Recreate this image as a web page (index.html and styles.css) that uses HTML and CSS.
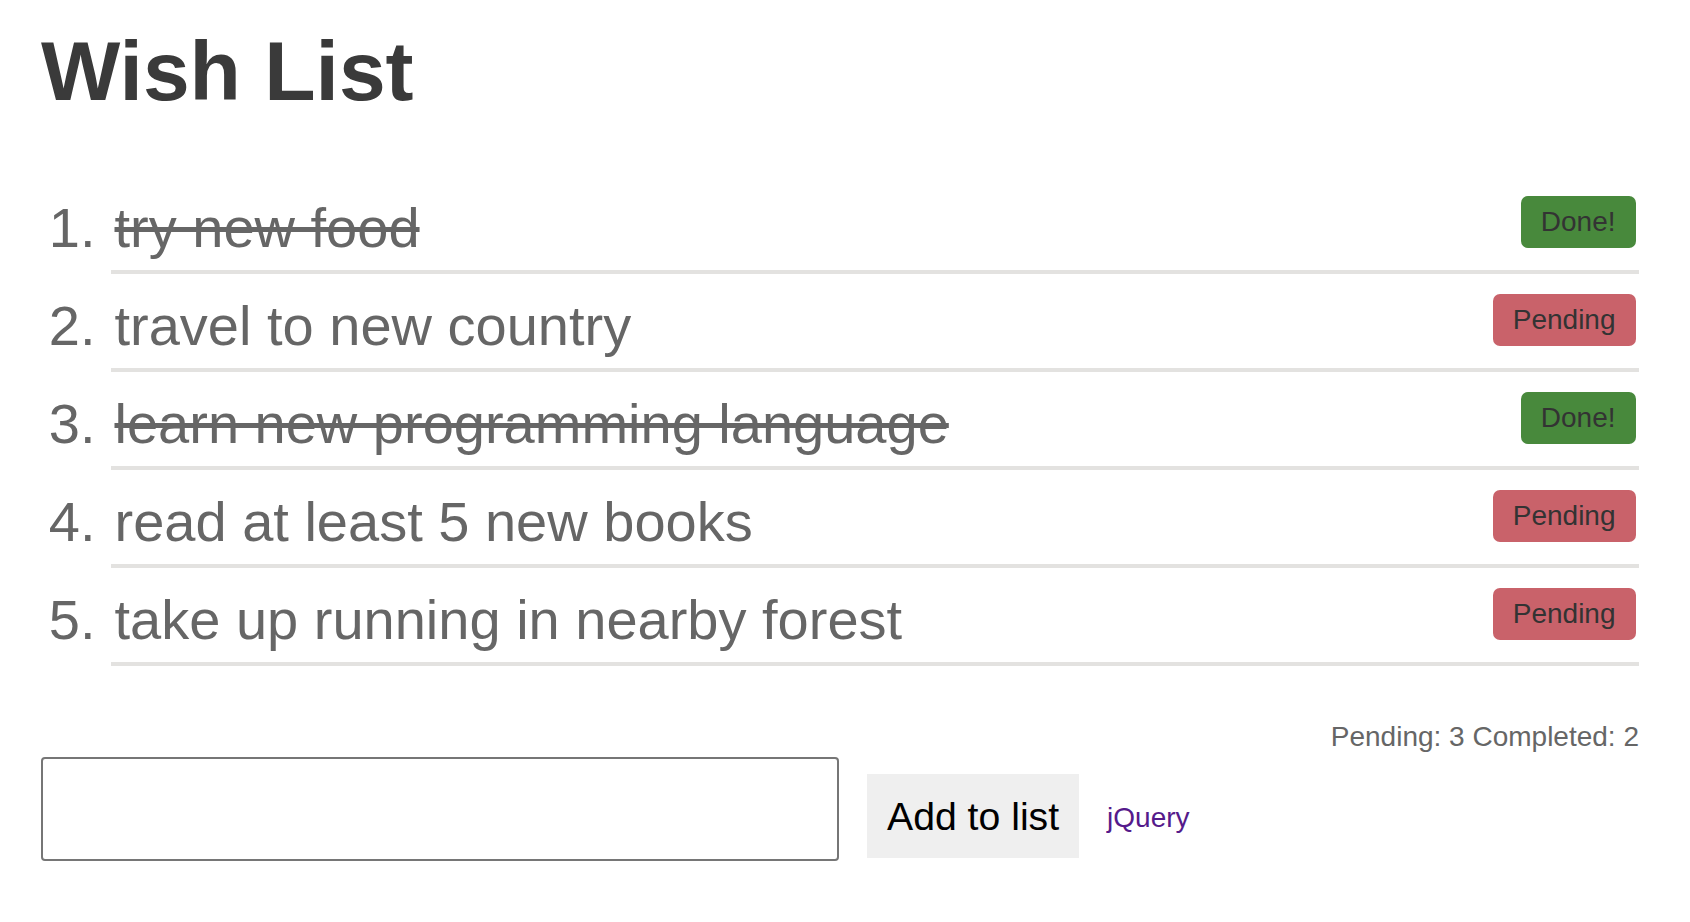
FILE: index.html
```html
<!DOCTYPE html>
<html lang="en">
<head>
<meta charset="utf-8">
<title>Wish List</title>
<link rel="stylesheet" href="styles.css">
</head>
<body>
<main class="page">
  <h1 class="title">Wish List</h1>
  <ol class="wishes">
    <li class="wish"><span class="badge badge-done">Done!</span><span class="wish-text done">try new food</span></li>
    <li class="wish"><span class="badge badge-pending">Pending</span><span class="wish-text">travel to new country</span></li>
    <li class="wish"><span class="badge badge-done">Done!</span><span class="wish-text done">learn new programming language</span></li>
    <li class="wish"><span class="badge badge-pending">Pending</span><span class="wish-text">read at least 5 new books</span></li>
    <li class="wish"><span class="badge badge-pending">Pending</span><span class="wish-text">take up running in nearby forest</span></li>
  </ol>
  <div class="stats">Pending: 3 Completed: 2</div>
  <form class="add-form">
    <input class="add-input" type="text" aria-label="New wish">
    <button class="add-button" type="button">Add to list</button>
    <a class="lib-link" href="#">jQuery</a>
  </form>
</main>
</body>
</html>
```

FILE: styles.css
```css
html, body {
  margin: 0;
  padding: 0;
  background: #ffffff;
}

body {
  font-family: "Liberation Sans", Arial, Helvetica, sans-serif;
  color: #666666;
}

.page {
  width: 1598px;
  margin-left: 41px;
  padding-top: 29px;
}

.title {
  margin: 0;
  font-size: 84px;
  line-height: 84px;
  font-weight: bold;
  color: #3a3a3a;
}

.wishes {
  margin: 63px 0 0 0;
  padding-left: 70px;
}

.wish {
  display: list-item;
  padding: 19.5px 0 10.5px 3.5px;
  font-size: 56px;
  line-height: 64px;
  color: #666666;
  border-bottom: 4px solid #e3e2e0;
}

.wish::after {
  content: "";
  display: block;
  clear: both;
}

.wish-text.done {
  text-decoration: line-through;
}

.badge {
  float: right;
  margin-top: 0.5px;
  margin-right: 3.5px;
  padding: 10px 20px;
  font-size: 28px;
  line-height: 32px;
  color: #333333;
  border-radius: 7px;
}

.badge-done {
  background: #48893c;
}

.badge-pending {
  background: #c9626a;
}

.stats {
  margin-top: 55px;
  text-align: right;
  font-size: 28px;
  line-height: 32px;
  color: #666666;
}

.add-form {
  display: flex;
  align-items: flex-start;
  margin: 4px 0 0 0;
}

.add-input {
  box-sizing: border-box;
  width: 798px;
  height: 104px;
  margin: 0;
  border: 2px solid #767676;
  border-radius: 4px;
  background: #ffffff;
  font-family: inherit;
  font-size: 39px;
  padding: 0 8px;
}

.add-button {
  margin: 17px 0 0 28px;
  padding: 19.5px 20px;
  border: none;
  border-radius: 0;
  background: #efefef;
  color: #000000;
  font-family: inherit;
  font-size: 39.2px;
  line-height: 45px;
}

.lib-link {
  margin: 45px 0 0 28px;
  font-size: 28px;
  line-height: 32px;
  color: #551a8b;
  text-decoration: none;
}
```
